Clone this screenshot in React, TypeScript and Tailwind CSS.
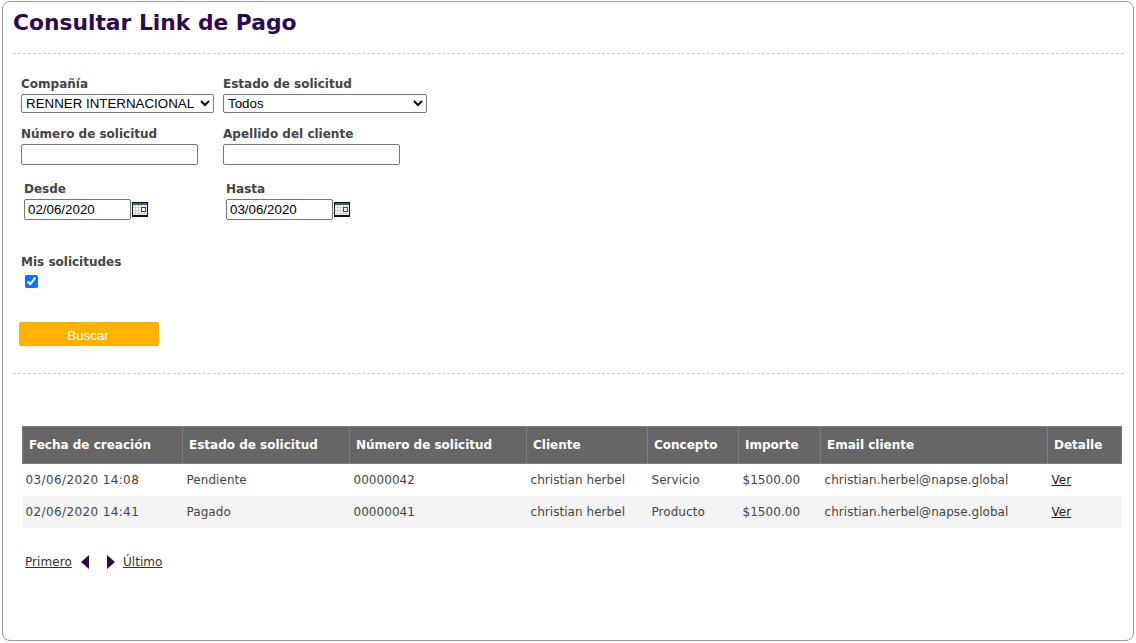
const FONT = "font-['DejaVu_Sans',Verdana,sans-serif]";

const COLS = [
  { label: 'Fecha de creación', width: 'w-[160px]' },
  { label: 'Estado de solicitud', width: 'w-[167px]' },
  { label: 'Número de solicitud', width: 'w-[177px]' },
  { label: 'Cliente', width: 'w-[121px]' },
  { label: 'Concepto', width: 'w-[91px]' },
  { label: 'Importe', width: 'w-[82px]' },
  { label: 'Email cliente', width: 'w-[227px]' },
  { label: 'Detalle', width: 'w-[74px]' },
];

const ROWS = [
  ['03/06/2020 14:08', 'Pendiente', '00000042', 'christian herbel', 'Servicio', '$1500.00', 'christian.herbel@napse.global'],
  ['02/06/2020 14:41', 'Pagado', '00000041', 'christian herbel', 'Producto', '$1500.00', 'christian.herbel@napse.global'],
];

function CalendarIcon() {
  return (
    <svg width="16" height="15" viewBox="0 0 16 15" className="mt-[5px] ml-px shrink-0" aria-hidden>
      <rect x="0" y="0" width="16" height="15" fill="#111" />
      <rect x="1" y="1" width="14" height="2" fill="#3a5a9c" />
      <rect x="1" y="3" width="14" height="10" fill="#fff" />
      <path d="M1 5.5h14M1 8.5h14M1 11.5h14M3.5 3v10M6.5 3v10M9.5 3v10M12.5 3v10" stroke="#cfcfcf" strokeWidth="1" />
      <rect x="9.5" y="5.5" width="4" height="4" fill="#fff" stroke="#ff0000" strokeWidth="1" />
    </svg>
  );
}

function Label({ children }: { children: string }) {
  return <label className="block h-[16px] text-[12px] leading-[16px] font-bold text-[#444]">{children}</label>;
}

function DateField({ label, value }: { label: string; value: string }) {
  return (
    <div className="w-[202px]">
      <Label>{label}</Label>
      <div className="flex h-[23px]">
        <input
          readOnly
          value={value}
          className="mt-[2px] h-[21px] w-[107px] rounded-[2px] border border-[#767676] px-[3px] font-['Liberation_Sans',Arial,sans-serif] text-[13.33px] text-black"
        />
        <CalendarIcon />
      </div>
    </div>
  );
}

export default function App() {
  return (
    <div className={`${FONT} h-[643px] w-[1136px] overflow-hidden bg-white px-[2px] pt-px pb-[2px]`}>
      <div className="h-[640px] rounded-[8px] border border-[#999] px-[10px]">
        <h1 className="pt-[5px] text-[21.8px] leading-[32px] font-bold text-[#2d0a50]">Consultar Link de Pago</h1>
        <div className="mt-[14px] w-[1111px] border-t border-dashed border-[#ccc]" />

        <div className="mt-[22px] flex gap-[9px] pl-[8px]">
          <div>
            <Label>Compañía</Label>
            <select className="mt-[2px] block h-[19px] w-[193px] rounded-[2px] border border-[#767676] font-['Liberation_Sans',Arial,sans-serif] text-[13.33px] leading-[17px] text-black">
              <option>RENNER INTERNACIONAL</option>
            </select>
          </div>
          <div>
            <Label>Estado de solicitud</Label>
            <select className="mt-[2px] block h-[19px] w-[204px] rounded-[2px] border border-[#767676] font-['Liberation_Sans',Arial,sans-serif] text-[13.33px] leading-[17px] text-black">
              <option>Todos</option>
            </select>
          </div>
        </div>

        <div className="mt-[13px] flex gap-[25px] pl-[8px]">
          <div>
            <Label>Número de solicitud</Label>
            <input className="mt-[2px] block h-[21px] w-[177px] rounded-[2px] border border-[#767676]" />
          </div>
          <div>
            <Label>Apellido del cliente</Label>
            <input className="mt-[2px] block h-[21px] w-[177px] rounded-[2px] border border-[#767676]" />
          </div>
        </div>

        <div className="mt-[16px] flex pl-[11px]">
          <DateField label="Desde" value="02/06/2020" />
          <DateField label="Hasta" value="03/06/2020" />
        </div>

        <div className="mt-[34px] pl-[8px]">
          <Label>Mis solicitudes</Label>
          <input type="checkbox" readOnly checked className="mt-[5px] ml-[4px] block h-[13px] w-[13px] accent-[#0075ff]" />
        </div>

        <button className="mt-[34px] ml-[6px] block h-[24px] w-[140px] rounded-[2px] bg-[#ffb300] pt-[4px] pr-[2px] font-['Liberation_Sans',Arial,sans-serif] text-[13.33px] text-white">
          Buscar
        </button>

        <div className="mt-[27px] w-[1111px] border-t border-dashed border-[#ccc]" />

        <table className="mt-[52px] ml-[9px] w-[1099px] table-fixed border-collapse text-[12px] text-[#444]">
          <thead>
            <tr className="h-[37px] bg-[#666]">
              {COLS.map((c) => (
                <th
                  key={c.label}
                  className={`${c.width} border border-[#7d7d7d] pl-[6px] text-left text-[12px] font-bold text-white`}
                >
                  {c.label}
                </th>
              ))}
            </tr>
          </thead>
          <tbody>
            {ROWS.map((row, i) => (
              <tr key={row[2]} className={i % 2 ? 'h-[32px] bg-[#f4f4f4]' : 'h-[32px]'}>
                {row.map((cell, j) => (
                  <td key={cell} className={j === 0 ? 'truncate pl-[3px] tracking-[0.38px]' : 'truncate pl-[4px] tracking-[0.05px]'}>
                    {cell}
                  </td>
                ))}
                <td className="pl-[4px]">
                  <a href="#" className="text-[#222] underline">Ver</a>
                </td>
              </tr>
            ))}
          </tbody>
        </table>

        <div className="mt-[26px] ml-[12px] flex items-center text-[12px] leading-[16px] tracking-[0.07px] text-[#333]">
          <a href="#" className="underline">Primero</a>
          <span className="mr-[18px] ml-[9px] h-0 w-0 border-y-[7px] border-r-[8px] border-y-transparent border-r-[#2d0a50]" />
          <span className="mr-[8px] h-0 w-0 border-y-[7px] border-l-[8px] border-y-transparent border-l-[#2d0a50]" />
          <a href="#" className="underline">Último</a>
        </div>
      </div>
    </div>
  );
}
